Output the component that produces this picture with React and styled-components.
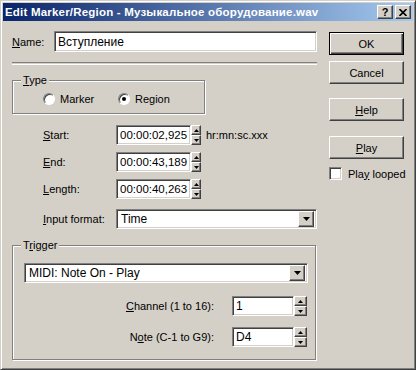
import React from 'react';
import styled, { css, createGlobalStyle } from 'styled-components';

const Global = createGlobalStyle`
  html, body {
    margin: 0;
    padding: 0;
    background: #d4d0c8;
  }
  body {
    font-family: "Liberation Sans", Arial, sans-serif;
    font-size: 11px;
    color: #000;
  }
`;

const raised = css`
  border: 1px solid;
  border-color: #fff #404040 #404040 #fff;
  box-shadow: inset -1px -1px #808080;
  background: #d4d0c8;
  box-sizing: border-box;
`;

const sunken = css`
  border: 1px solid;
  border-color: #808080 #fff #fff #808080;
  box-shadow: inset 1px 1px #404040, inset -1px -1px #d4d0c8;
  background: #fff;
  box-sizing: border-box;
`;

const Window = styled.div`
  width: 416px;
  height: 370px;
  box-sizing: border-box;
  background: #d4d0c8;
  border: 1px solid;
  border-color: #d4d0c8 #404040 #404040 #d4d0c8;
  box-shadow: inset 1px 1px #fff, inset -1px -1px #808080;
  padding: 2px;
  display: flex;
  flex-direction: column;
`;

const TitleBar = styled.div`
  height: 18px;
  display: flex;
  align-items: center;
  padding: 0 2px;
  background: linear-gradient(to right, #0a246a, #a6caf0);
`;

const TitleText = styled.div`
  flex: 1;
  color: #fff;
  font-weight: bold;
  font-size: 11.5px;
  white-space: nowrap;
  letter-spacing: 0.2px;
`;

const CaptionButton = styled.div`
  ${raised};
  width: 16px;
  height: 14px;
  margin-left: 2px;
  display: flex;
  align-items: center;
  justify-content: center;
  font-weight: bold;
  font-size: 11px;
  line-height: 1;
`;

const Body = styled.div`
  display: flex;
  gap: 12px;
  padding: 10px 8px 0 9px;
`;

const LeftColumn = styled.div`
  width: 305px;
  display: flex;
  flex-direction: column;
`;

const RightColumn = styled.div`
  width: 75px;
  display: flex;
  flex-direction: column;
  padding-top: 1px;
`;

const Row = styled.div`
  display: flex;
  align-items: center;
  height: ${p => p.$h || 20}px;
  margin-top: ${p => p.$mt || 0}px;
  padding-left: ${p => p.$indent || 0}px;
  justify-content: ${p => (p.$end ? 'flex-end' : 'flex-start')};
`;

const Label = styled.label`
  width: ${p => (p.$w ? `${p.$w}px` : 'auto')};
  margin-right: ${p => p.$mr || 0}px;
  white-space: nowrap;
`;

const TextField = styled.div`
  ${sunken};
  width: ${p => p.$w}px;
  height: ${p => p.$h || 20}px;
  padding: 0 2px 0 3px;
  display: flex;
  align-items: center;
  font-size: ${p => p.$fs || 11}px;
  white-space: nowrap;
  overflow: hidden;
`;

const Separator = styled.div`
  height: 1px;
  margin-top: 10px;
  border-top: 1px solid #808080;
  border-bottom: 1px solid #fff;
`;

const Group = styled.div`
  position: relative;
  width: ${p => p.$w}px;
  height: ${p => p.$h}px;
  margin-top: ${p => p.$mt || 0}px;
  box-sizing: border-box;
  border: 1px solid #808080;
  box-shadow: 1px 1px #fff, inset 1px 1px #fff;
  padding: ${p => p.$pad || 0};
`;

const GroupCaption = styled.div`
  position: absolute;
  top: -7px;
  left: 8px;
  padding: 0 2px;
  line-height: 13px;
  background: #d4d0c8;
`;

const RadioRow = styled.div`
  display: flex;
  align-items: center;
  height: 100%;
  padding: 4px 0 0 30px;
  box-sizing: border-box;
`;

const RadioItem = styled.div`
  width: 75px;
  display: flex;
  align-items: center;
  gap: 5px;
`;

const RadioCircle = styled.span`
  width: 12px;
  height: 12px;
  border-radius: 50%;
  box-sizing: border-box;
  border: 1px solid;
  border-color: #808080 #fff #fff #808080;
  box-shadow: inset 1px 1px #404040;
  background: #fff;
  display: flex;
  align-items: center;
  justify-content: center;
  &::after {
    content: '';
    display: ${p => (p.$checked ? 'block' : 'none')};
    width: 4px;
    height: 4px;
    border-radius: 50%;
    background: #000;
  }
`;

const SpinBox = styled.div`
  width: ${p => p.$w}px;
  height: 20px;
  display: flex;
  flex-direction: column;
`;

const SpinHalf = styled.div`
  ${raised};
  flex: 1;
  display: flex;
  align-items: center;
  justify-content: center;
`;

const Hint = styled.span`
  margin-left: 5px;
`;

const Combo = styled.div`
  ${sunken};
  width: ${p => p.$w}px;
  height: 20px;
  padding: 2px 2px 2px 4px;
  display: flex;
  align-items: center;
`;

const ComboText = styled.div`
  flex: 1;
  font-size: 12px;
`;

const ComboButton = styled.div`
  ${raised};
  width: 16px;
  height: 16px;
  display: flex;
  align-items: center;
  justify-content: center;
`;

const Button = styled.div`
  height: 23px;
  margin-top: ${p => p.$mt || 0}px;
  box-sizing: border-box;
  background: #d4d0c8;
  display: flex;
  align-items: center;
  justify-content: center;
  ${p =>
    p.$default
      ? css`
          border: 1px solid #000;
          box-shadow: inset 1px 1px #fff, inset -1px -1px #404040, inset -2px -2px #808080;
        `
      : css`
          border: 1px solid;
          border-color: #fff #404040 #404040 #fff;
          box-shadow: inset -1px -1px #808080;
        `}
`;

const CheckRow = styled.div`
  display: flex;
  align-items: center;
  gap: 6px;
  margin-top: 8px;
  height: 13px;
  white-space: nowrap;
`;

const CheckBox = styled.span`
  ${sunken};
  flex: none;
  width: 13px;
  height: 13px;
`;

const UpArrow = () => (
  <svg width="5" height="3" viewBox="0 0 5 3"><polygon points="2.5,0 5,3 0,3" fill="#000" /></svg>
);

const DownArrow = ({ w = 5, h = 3 }) => (
  <svg width={w} height={h} viewBox={`0 0 ${w} ${h}`}><polygon points={`0,0 ${w},0 ${w / 2},${h}`} fill="#000" /></svg>
);

const Spinner = ({ w }) => (
  <SpinBox $w={w}>
    <SpinHalf><UpArrow /></SpinHalf>
    <SpinHalf><DownArrow /></SpinHalf>
  </SpinBox>
);

const Dropdown = ({ w, children }) => (
  <Combo $w={w}>
    <ComboText>{children}</ComboText>
    <ComboButton><DownArrow w={7} h={4} /></ComboButton>
  </Combo>
);

const TimeRow = ({ label, u, value, mt, hint }) => (
  <Row $mt={mt} $indent={31}>
    <Label $w={73}><u>{u}</u>{label}</Label>
    <TextField $w={75} $fs={11.5}>{value}</TextField>
    <Spinner w={10} />
    {hint && <Hint>{hint}</Hint>}
  </Row>
);

export default function App() {
  return (
    <>
      <Global />
      <Window>
        <TitleBar>
          <TitleText>Edit Marker/Region - Музыкальное оборудование.wav</TitleText>
          <CaptionButton>?</CaptionButton>
          <CaptionButton>
            <svg width="8" height="7" viewBox="0 0 8 7">
              <path d="M0.5 0 L7.5 7 M7.5 0 L0.5 7" stroke="#000" strokeWidth="1.6" />
            </svg>
          </CaptionButton>
        </TitleBar>
        <Body>
          <LeftColumn>
            <Row $h={21}>
              <Label $w={42}><u>N</u>ame:</Label>
              <TextField $w={263} $h={21} $fs={12}>Вступление</TextField>
            </Row>
            <Separator />
            <Group $w={193} $h={34} $mt={15}>
              <GroupCaption><u>T</u>ype</GroupCaption>
              <RadioRow>
                <RadioItem><RadioCircle />Marker</RadioItem>
                <RadioItem><RadioCircle $checked />Region</RadioItem>
              </RadioRow>
            </Group>
            <TimeRow mt={11} u="S" label="tart:" value="00:00:02,925" hint="hr:mn:sc.xxx" />
            <TimeRow mt={7} u="E" label="nd:" value="00:00:43,189" />
            <TimeRow mt={7} u="L" label="ength:" value="00:00:40,263" />
            <Row $mt={10} $indent={31}>
              <Label $w={73}><u>I</u>nput format:</Label>
              <Dropdown w={201}>Time</Dropdown>
            </Row>
            <Group $w={304} $h={115} $mt={16} $pad="17px 8px 0 11px">
              <GroupCaption>T<u>r</u>igger</GroupCaption>
              <Dropdown w={284}>MIDI: Note On - Play</Dropdown>
              <Row $mt={13} $end>
                <Label $mr={18}><u>C</u>hannel (1 to 16):</Label>
                <TextField $w={62} $fs={12}>1</TextField>
                <Spinner w={13} />
              </Row>
              <Row $mt={11} $end>
                <Label $mr={18}>N<u>o</u>te (C-1 to G9):</Label>
                <TextField $w={62} $fs={12}>D4</TextField>
                <Spinner w={13} />
              </Row>
            </Group>
          </LeftColumn>
          <RightColumn>
            <Button $default>OK</Button>
            <Button $mt={6}>Cancel</Button>
            <Button $mt={14}><span><u>H</u>elp</span></Button>
            <Button $mt={15}><span><u>P</u>lay</span></Button>
            <CheckRow>
              <CheckBox />
              <span>Pla<u>y</u> looped</span>
            </CheckRow>
          </RightColumn>
        </Body>
      </Window>
    </>
  );
}
